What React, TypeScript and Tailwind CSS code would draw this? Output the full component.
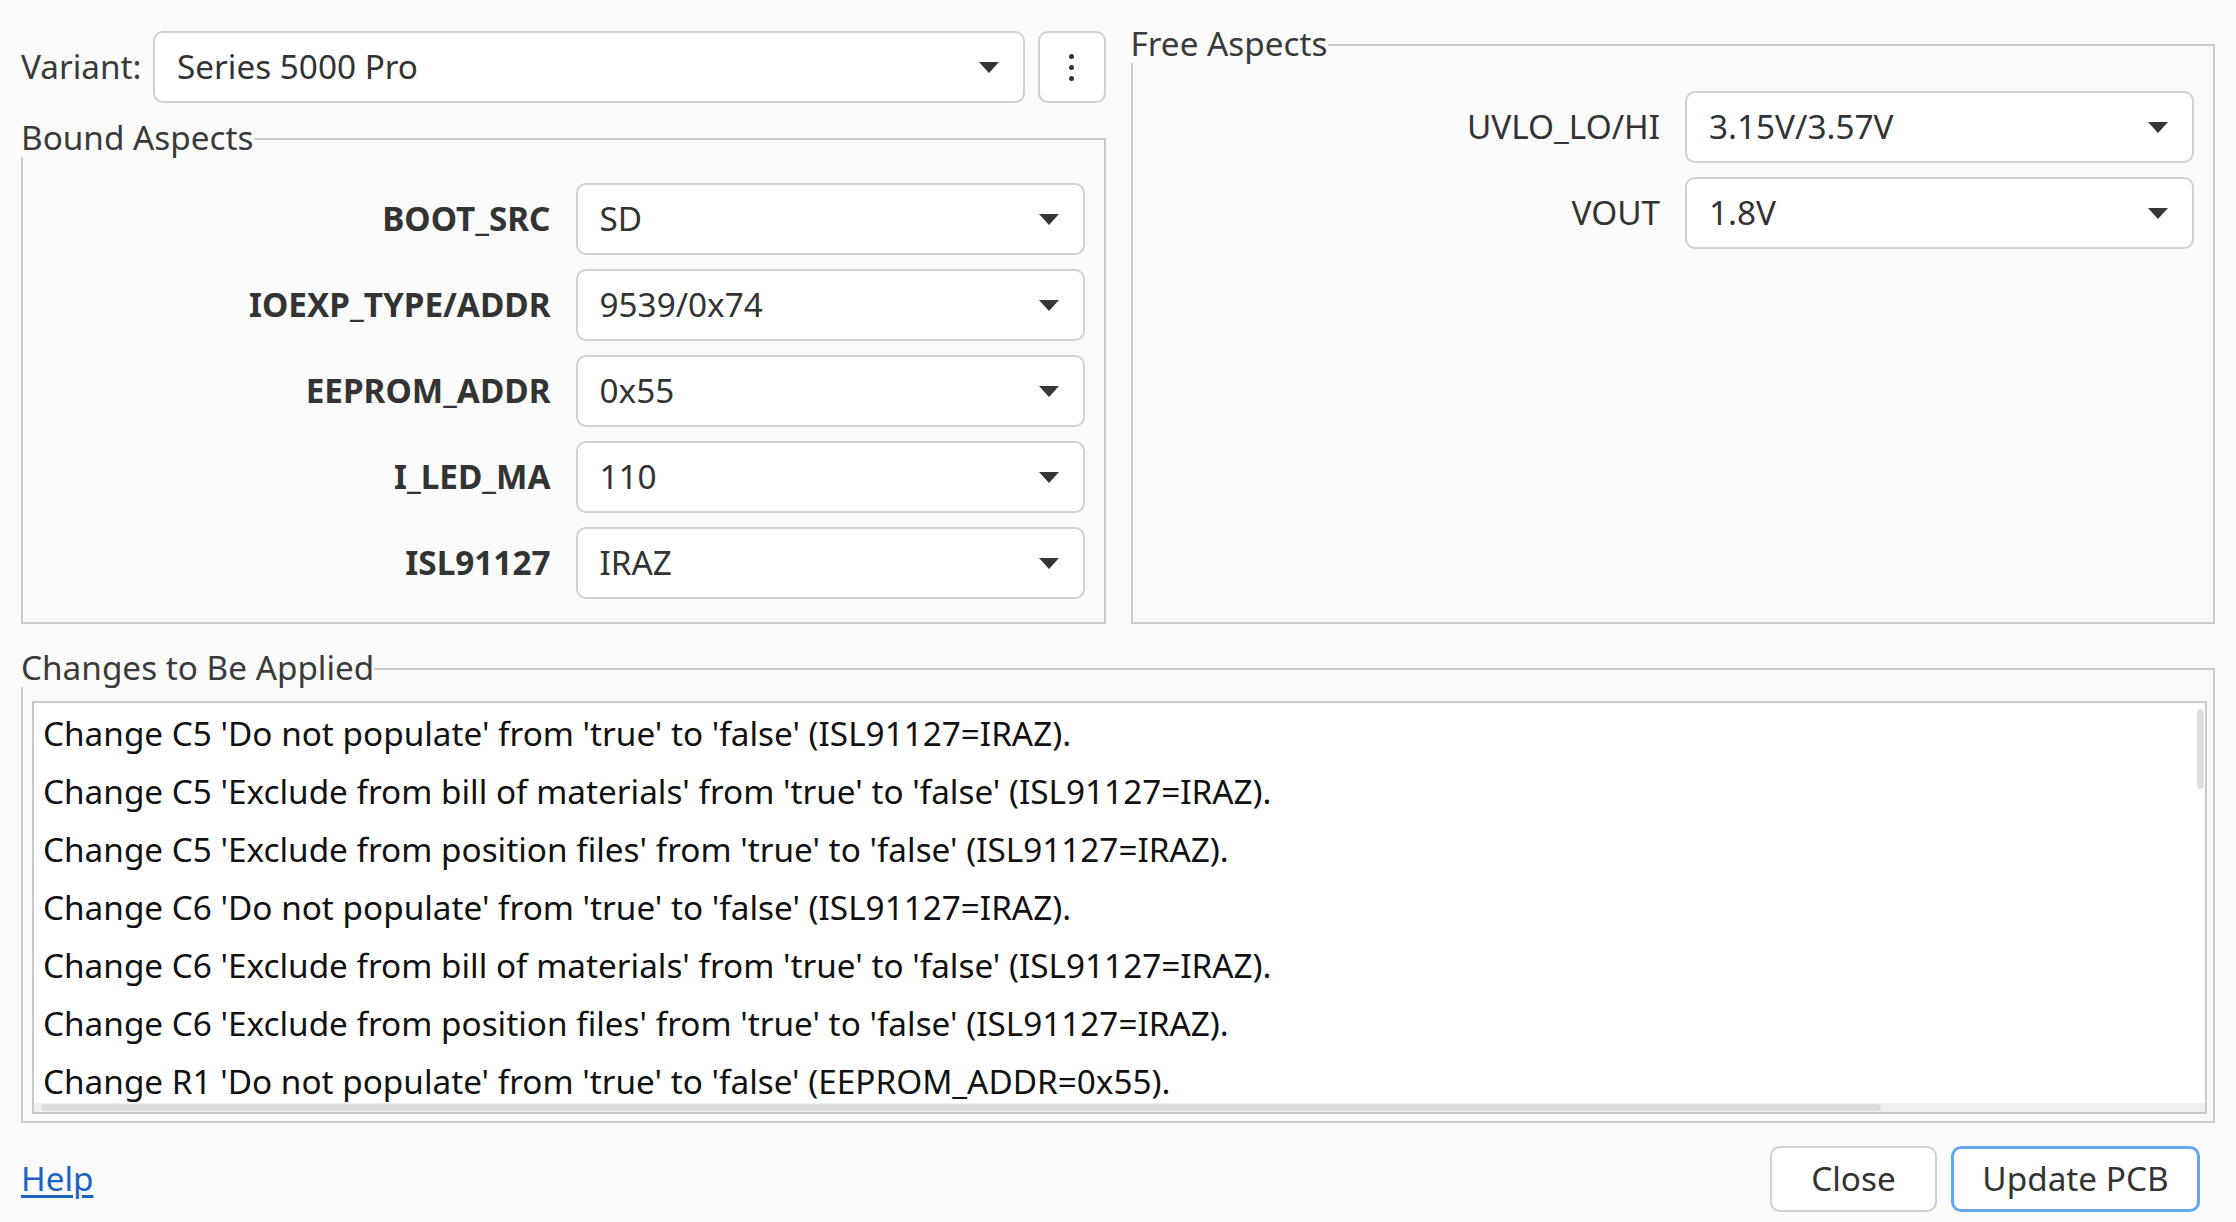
import React from "react";

const font = "font-['Noto_Sans',sans-serif]";

const Arrow: React.FC = () => (
  <svg width="20" height="11" viewBox="0 0 20 11" className="shrink-0">
    <path d="M0 0 H20 L10 11 Z" fill="#363636" />
  </svg>
);

const Combo: React.FC<{ value: string; className?: string }> = ({ value, className }) => (
  <div
    className={
      "flex h-[72px] items-center justify-between rounded-[10px] border-2 border-[#d0d0d0] bg-white pl-[22px] pr-[24px] text-[#333] " +
      (className ?? "")
    }
  >
    <span className="whitespace-nowrap">{value}</span>
    <Arrow />
  </div>
);

const GroupBox: React.FC<{ title: string; className?: string; bodyClass?: string; children: React.ReactNode }> = ({
  title,
  className,
  bodyClass,
  children,
}) => (
  <div className={"flex flex-col " + (className ?? "")}>
    <div className="flex h-[40px] leading-[40px] text-[#3a3a3a]">
      <span className="whitespace-nowrap">{title}</span>
      <div className="mt-[21px] flex-1 border-t-2 border-r-2 border-[#cbcbcb]" />
    </div>
    <div className={"flex-1 border-2 border-t-0 border-[#cbcbcb] " + (bodyClass ?? "")}>{children}</div>
  </div>
);

const bound = [
  ["BOOT_SRC", "SD"],
  ["IOEXP_TYPE/ADDR", "9539/0x74"],
  ["EEPROM_ADDR", "0x55"],
  ["I_LED_MA", "110"],
  ["ISL91127", "IRAZ"],
];

const free = [
  ["UVLO_LO/HI", "3.15V/3.57V"],
  ["VOUT", "1.8V"],
];

const changes = [
  "Change C5 'Do not populate' from 'true' to 'false' (ISL91127=IRAZ).",
  "Change C5 'Exclude from bill of materials' from 'true' to 'false' (ISL91127=IRAZ).",
  "Change C5 'Exclude from position files' from 'true' to 'false' (ISL91127=IRAZ).",
  "Change C6 'Do not populate' from 'true' to 'false' (ISL91127=IRAZ).",
  "Change C6 'Exclude from bill of materials' from 'true' to 'false' (ISL91127=IRAZ).",
  "Change C6 'Exclude from position files' from 'true' to 'false' (ISL91127=IRAZ).",
  "Change R1 'Do not populate' from 'true' to 'false' (EEPROM_ADDR=0x55).",
];

export default function App() {
  return (
    <div className={`${font} h-[1222px] w-[2236px] overflow-hidden bg-[#fafafa] px-[21px] pt-[23px] text-[33.3px] text-[#333]`}>
      {/* top two columns */}
      <div className="grid h-[601px] grid-cols-2 gap-x-[25px]">
        <div className="flex flex-col">
          <div className="mt-[8px] flex h-[72px] items-center gap-[13px]">
            <span className="w-[119px] text-[#3a3a3a]">Variant:</span>
            <Combo value="Series 5000 Pro" className="flex-1" />
            <div className="flex h-[72px] w-[68px] flex-col items-center justify-center gap-[6px] rounded-[10px] border-2 border-[#d0d0d0] bg-white">
              <span className="h-[5px] w-[5px] rounded-full bg-[#333]" />
              <span className="h-[5px] w-[5px] rounded-full bg-[#333]" />
              <span className="h-[5px] w-[5px] rounded-full bg-[#333]" />
            </div>
          </div>
          <GroupBox title="Bound Aspects" className="mt-[14px] flex-1" bodyClass="pt-[26px] pr-[19px]">
            <div className="grid grid-cols-[1fr_509px] items-center gap-x-[25px] gap-y-[14px]">
              {bound.map(([label, value]) => (
                <React.Fragment key={label}>
                  <span className="text-right font-bold text-[#333]">{label}</span>
                  <Combo value={value} />
                </React.Fragment>
              ))}
            </div>
          </GroupBox>
        </div>

        <GroupBox title="Free Aspects" bodyClass="pt-[28px] pr-[19px]">
          <div className="grid grid-cols-[1fr_509px] items-center gap-x-[25px] gap-y-[14px]">
            {free.map(([label, value]) => (
              <React.Fragment key={label}>
                <span className="text-right text-[#333]">{label}</span>
                <Combo value={value} />
              </React.Fragment>
            ))}
          </div>
        </GroupBox>
      </div>

      {/* changes list */}
      <GroupBox title="Changes to Be Applied" className="mt-[23px] h-[476px]" bodyClass="pl-[9px] pr-[6px] pt-[14px] pb-[5px]">
        <div className="relative h-[413px] overflow-hidden border-2 border-[#c9c9c9] bg-white pl-[9px] pt-[1px] text-[#111]">
          {changes.map((c) => (
            <div key={c} className="h-[58px] whitespace-nowrap leading-[58px]">
              {c}
            </div>
          ))}
          {/* scrollbars */}
          <div className="absolute right-[1px] top-[6px] h-[80px] w-[7px] rounded-full bg-[#dedede]" />
          <div className="absolute bottom-0 left-0 right-0 h-[9px] bg-[#f0f0f0]" />
          <div className="absolute bottom-[1px] left-[7px] h-[7px] w-[1840px] rounded-full bg-[#dcdcdc]" />
        </div>
      </GroupBox>

      {/* bottom bar */}
      <div className="mt-[23px] flex items-center pr-[15px]">
        <a href="#" className="text-[#1a63c5] underline underline-offset-[4px]">
          Help
        </a>
        <div className="ml-auto flex gap-[14px]">
          <button className="h-[66px] w-[167px] rounded-[10px] border-2 border-[#cfcfcf] bg-white text-[#333]">
            Close
          </button>
          <button className="h-[66px] w-[249px] rounded-[10px] border-[3px] border-[#63a7f2] bg-white text-[#333]">
            Update PCB
          </button>
        </div>
      </div>
    </div>
  );
}
